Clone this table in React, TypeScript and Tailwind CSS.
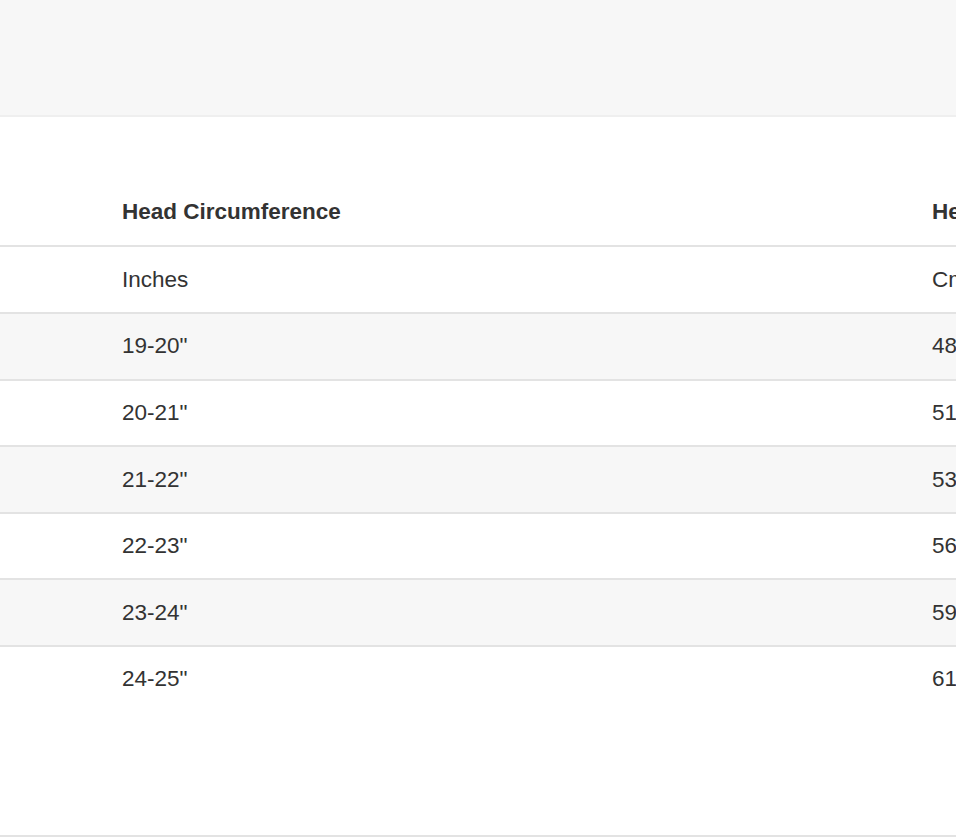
import React from "react";

const rows = [
  ["19-20\"", "48-51cm"],
  ["20-21\"", "51-53cm"],
  ["21-22\"", "53-56cm"],
  ["22-23\"", "56-59cm"],
  ["23-24\"", "59-61cm"],
  ["24-25\"", "61-64cm"],
];

export default function App() {
  return (
    <div
      className="w-[956px] h-[838px] overflow-hidden bg-white text-[#333] text-[22.5px]"
      style={{ fontFamily: '"Liberation Sans", Arial, sans-serif' }}
    >
      <div className="h-[117px] bg-[#f7f7f7] border-b-2 border-[#efefef]" />
      <div className="mt-[62px] w-[1800px]">
        <div className="grid grid-cols-[107px_810px_810px] h-[66px] items-center font-bold">
          <div />
          <div className="px-[15px]">Head Circumference</div>
          <div className="px-[15px]">Head Circumference</div>
        </div>
        <div className="grid grid-cols-[107px_810px_810px] h-[67px] items-center border-t-2 border-[#e3e3e3] bg-white">
          <div />
          <div className="px-[15px]">Inches</div>
          <div className="px-[15px]">Cm</div>
        </div>
        {rows.map((r, i) => (
          <div
            key={i}
            className={`grid grid-cols-[107px_810px_810px] h-[66.6px] items-center border-t-2 border-[#e3e3e3] ${
              i % 2 === 0 ? "bg-[#f7f7f7]" : "bg-white"
            }`}
          >
            <div />
            <div className="px-[15px]">{r[0]}</div>
            <div className="px-[15px]">{r[1]}</div>
          </div>
        ))}
      </div>
      <div className="mt-[123px] border-t-2 border-[#e3e3e3] h-[10px]" />
    </div>
  );
}
